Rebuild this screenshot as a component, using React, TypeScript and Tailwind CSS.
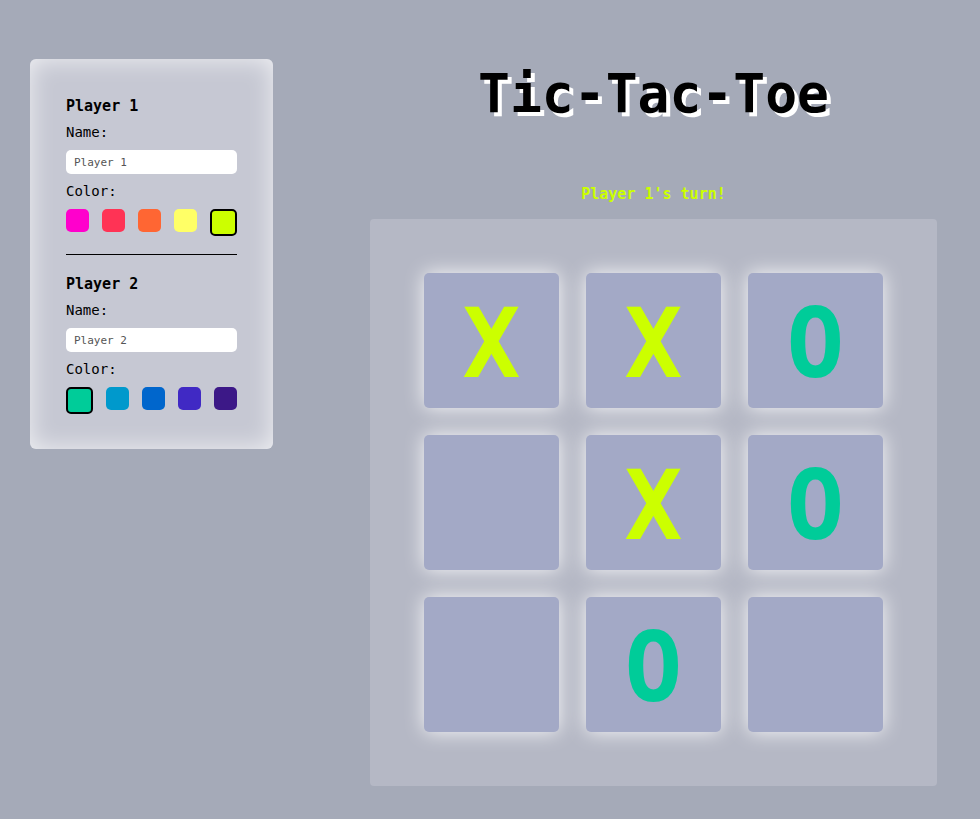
import { useState } from "react";

const mono = { fontFamily: '"DejaVu Sans Mono", "Liberation Mono", monospace' };

const p1Colors = ["#ff00cc", "#ff3355", "#ff6633", "#ffff66", "#ccff00"];
const p2Colors = ["#00cc99", "#0099cc", "#0066cc", "#4029c4", "#3c1887"];

type PlayerProps = {
  label: string;
  name: string;
  colors: string[];
  selected: number;
  onName: (v: string) => void;
  onPick: (i: number) => void;
};

function PlayerSettings({ label, name, colors, selected, onName, onPick }: PlayerProps) {
  return (
    <div>
      <h2 className="text-[15px] font-bold leading-none text-black">{label}</h2>
      <p className="mt-[11px] text-[14px] leading-none text-black">Name:</p>
      <input
        value={name}
        onChange={(e) => onName(e.target.value)}
        className="mt-[11px] block h-6 w-full rounded-[5px] bg-white px-2 text-[11px] text-[#555] outline-none"
        style={mono}
      />
      <p className="mt-[10px] text-[14px] leading-none text-black">Color:</p>
      <div className="mt-[11px] flex items-start justify-between">
        {colors.map((c, i) => (
          <button
            key={c}
            onClick={() => onPick(i)}
            className={
              i === selected
                ? "h-[27px] w-[27px] rounded-[5px] border-2 border-black"
                : "h-[23px] w-[23px] rounded-[5px]"
            }
            style={{ backgroundColor: c }}
          />
        ))}
      </div>
    </div>
  );
}

export default function App() {
  const [n1, setN1] = useState("Player 1");
  const [n2, setN2] = useState("Player 2");
  const [c1, setC1] = useState(4);
  const [c2, setC2] = useState(0);
  const board = ["X", "X", "O", "", "X", "O", "", "O", ""];

  return (
    <div className="min-h-[819px] bg-[#a5aab8] text-black" style={mono}>
      <div className="flex items-start pl-[30px]">
        <aside className="mt-[59px] w-[243px] rounded-[6px] bg-[#c6c8d3] px-9 pb-[35px] pt-[40px] shadow-[inset_0_0_24px_rgba(255,255,255,0.75)]">
          <PlayerSettings label="Player 1" name={n1} colors={p1Colors} selected={c1} onName={setN1} onPick={setC1} />
          <hr className="mb-[22px] mt-[18px] border-t border-black" />
          <PlayerSettings label="Player 2" name={n2} colors={p2Colors} selected={c2} onName={setN2} onPick={setC2} />
        </aside>

        <main className="ml-[97px] flex w-[567px] flex-col items-center">
          <h1
            className="mt-[67px] text-[53px] font-bold leading-none text-black"
            style={{ textShadow: "4px 4px 0 #ffffff" }}
          >
            Tic-Tac-Toe
          </h1>
          <p className="mt-[67px] text-[15px] font-bold leading-none text-[#ccff00]">Player 1's turn!</p>
          <div className="mt-[17px] grid w-[567px] grid-cols-3 gap-[27px] rounded-[4px] bg-[#b5b8c5] p-[54px]">
            {board.map((v, i) => (
              <div
                key={i}
                className="flex h-[135px] w-[135px] items-center justify-center rounded-[5px] bg-[#a3a9c6] shadow-[0_0_20px_rgba(255,255,255,0.9)]"
              >
                <span
                  className={
                    "pt-[7px] text-[96px] font-bold leading-none " +
                    (v === "X" ? "text-[#ccff00]" : "text-[#00cc99]")
                  }
                >
                  {v}
                </span>
              </div>
            ))}
          </div>
        </main>
      </div>
    </div>
  );
}
